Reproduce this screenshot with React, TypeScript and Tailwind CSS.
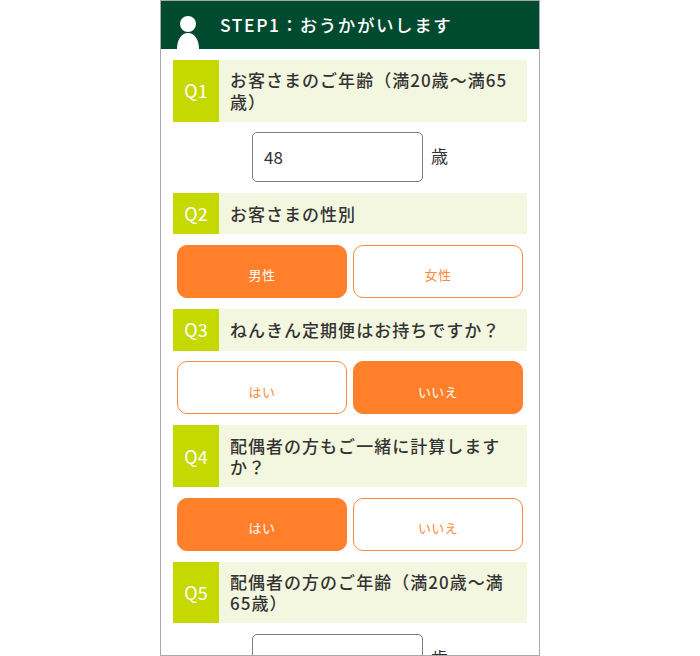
const font = '[font-family:"Noto_Sans_CJK_JP","Noto_Sans",sans-serif]';

function Question({ no, text, tall }: { no: string; text: string; tall?: boolean }) {
  return (
    <div className={`flex bg-[#f3f7df] ${tall ? 'h-[61.6px]' : 'h-[41.5px]'}`}>
      <div className="w-[46px] shrink-0 bg-[#c5d900] flex items-center justify-center text-white text-[18px] font-normal">{no}</div>
      <div className="flex-1 flex items-center pl-[11px] pr-[14px] text-[17px] leading-[21.5px] font-medium tracking-[0.06em] text-[#333333]">
        <p>{text}</p>
      </div>
    </div>
  );
}

function Choice({ label, on }: { label: string; on?: boolean }) {
  return (
    <button
      className={`w-[170px] h-[53px] rounded-[10px] border pt-[7px] text-[13px] tracking-[0.03em] flex items-center justify-center ${
        on ? 'bg-[#ff7f2a] border-[#ff7f2a] text-white' : 'bg-white border-[#ff8a3c] text-[#ff8a3c]'
      }`}
    >
      {label}
    </button>
  );
}

function Choices({ items, active }: { items: string[]; active: number }) {
  return (
    <div className="flex justify-center gap-[6px] my-[10.85px]">
      {items.map((item, i) => (
        <Choice key={item} label={item} on={i === active} />
      ))}
    </div>
  );
}

function AgeInput({ value }: { value?: string }) {
  return (
    <div className="flex items-center my-[10.85px] pl-[79px]">
      <div className="w-[171px] h-[49.6px] shrink-0 bg-white rounded-[5px] border border-[#7d7d7d] flex items-center pl-[11px] pb-[1px] text-[17px] text-[#333333]">
        {value}
      </div>
      <span className="ml-[8px] pb-[3px] text-[17px] text-[#333333]">歳</span>
    </div>
  );
}

export default function App() {
  return (
    <div className={`h-[656px] overflow-hidden bg-white ${font}`}>
      <div className="w-[380px] h-[656px] mx-auto border border-[#a9a9a9] overflow-hidden">
        <div className="h-[47.7px] bg-[#004a2f] flex items-center relative">
          <svg className="absolute left-[15px] top-[15px]" width="24" height="33" viewBox="0 0 24 33" fill="#fff">
            <circle cx="12" cy="8" r="8" />
            <path d="M1 33 C1 24 5 17 12 17 C19 17 23 24 23 33 Z" />
          </svg>
          <h1 className="ml-[59px] text-white text-[17.5px] font-medium tracking-[0.09em]">STEP1：おうかがいします</h1>
        </div>
        <div className="px-[12px] pt-[11.3px]">
          <Question no="Q1" text="お客さまのご年齢（満20歳～満65歳）" tall />
          <AgeInput value="48" />
          <Question no="Q2" text="お客さまの性別" />
          <Choices items={['男性', '女性']} active={0} />
          <Question no="Q3" text="ねんきん定期便はお持ちですか？" />
          <Choices items={['はい', 'いいえ']} active={1} />
          <Question no="Q4" text="配偶者の方もご一緒に計算しますか？" tall />
          <Choices items={['はい', 'いいえ']} active={0} />
          <Question no="Q5" text="配偶者の方のご年齢（満20歳～満65歳）" tall />
          <AgeInput />
        </div>
      </div>
    </div>
  );
}
